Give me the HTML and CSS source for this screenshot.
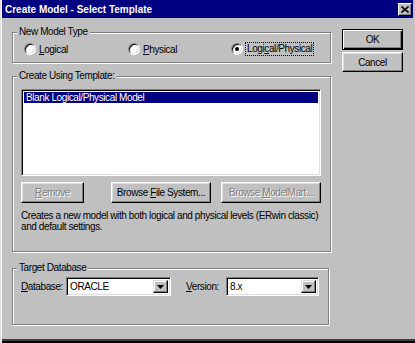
FILE: index.html
```html
<!DOCTYPE html>
<html lang="en">
<head>
    <meta charset="UTF-8">
    <title>Create Model - Select Template</title>
    <link rel="stylesheet" href="styles.css">
</head>
<body>
    <div class="window">
        <!-- Barra de título -->
        <div class="titlebar">
            <span class="title">Create Model - Select Template</span>
            <span class="close-btn">
                <svg width="8" height="7" viewBox="0 0 8 7"><path d="M0.5 0.5 L7.5 6.5 M7.5 0.5 L0.5 6.5" stroke="#000" stroke-width="1.6"/></svg>
            </span>
        </div>

        <div class="dialog">
            <div class="main">
                <fieldset class="group group-type">
                    <legend>New Model Type</legend>
                    <div class="radios">
                        <label class="radio"><span class="radio-circle"></span><span><u>L</u>ogical</span></label>
                        <label class="radio"><span class="radio-circle"></span><span><u>P</u>hysical</span></label>
                        <label class="radio"><span class="radio-circle checked"></span><span class="focus">Logi<u>c</u>al/Physical</span></label>
                    </div>
                </fieldset>

                <fieldset class="group group-template">
                    <legend>Create Using Template:</legend>
                    <div class="listbox">
                        <div class="list-item selected">Blank Logical/Physical Model</div>
                    </div>
                    <div class="button-row">
                        <button class="btn btn-remove" disabled><u>R</u>emove</button>
                        <button class="btn btn-browse"><span>Browse <u>F</u>ile System...</span></button>
                        <button class="btn btn-browse" disabled>Browse <u>M</u>odelMart...</button>
                    </div>
                    <p class="description">Creates a new model with both logical and physical levels (ERwin classic) and default settings.</p>
                </fieldset>

                <fieldset class="group group-target">
                    <legend>Target Database</legend>
                    <div class="combo-row">
                        <span class="combo-label"><u>D</u>atabase:</span>
                        <div class="combo combo-db">
                            <span class="combo-value">ORACLE</span>
                            <span class="combo-arrow"><svg width="7" height="4" viewBox="0 0 7 4"><path d="M0 0h7L3.5 4z" fill="#000"/></svg></span>
                        </div>
                        <span class="combo-label label-version"><u>V</u>ersion:</span>
                        <div class="combo combo-version">
                            <span class="combo-value">8.x</span>
                            <span class="combo-arrow"><svg width="7" height="4" viewBox="0 0 7 4"><path d="M0 0h7L3.5 4z" fill="#000"/></svg></span>
                        </div>
                    </div>
                </fieldset>
            </div>

            <!-- Botões laterais -->
            <div class="side">
                <button class="btn btn-default">OK</button>
                <button class="btn btn-cancel">Cancel</button>
            </div>
        </div>
    </div>
</body>
</html>
```

FILE: styles.css
```css
* {
    box-sizing: border-box;
}

body {
    margin: 0;
    background-color: #c0c0c0;
    font-family: "Liberation Sans", Arial, sans-serif;
    font-size: 10px;
    letter-spacing: -0.4px;
    color: #000;
}

.window {
    width: 415px;
    height: 343px;
    padding: 0 2px 4px 2px;
    background-color: #c0c0c0;
    box-shadow: inset 1px 0 #dfdfdf, inset 2px 0 #fff, inset 0 -2px #000, inset 0 -4px #404040;
    overflow: hidden;
}

/* Barra de título */
.titlebar {
    height: 18px;
    display: flex;
    align-items: center;
    justify-content: space-between;
    padding-left: 3px;
    background-color: #000080;
    color: #fff;
    font-weight: bold;
    letter-spacing: 0;
}

.close-btn {
    width: 14px;
    height: 13px;
    margin-right: 1px;
    display: flex;
    justify-content: center;
    align-items: center;
    background-color: #c0c0c0;
    border: 1px solid;
    border-color: #fff #000 #000 #fff;
    box-shadow: inset -1px -1px #808080;
}

.dialog {
    display: flex;
    padding-left: 10px;
}

.main {
    width: 319px;
}

/* Group boxes */
.group {
    margin: 0;
    padding: 0 7px 0 8px;
    border: 1px solid #808080;
    box-shadow: 1px 1px 0 #fff, inset 1px 1px 0 #fff;
}

.group legend {
    margin-left: -4px;
    padding: 0 2px;
    line-height: 12px;
    background-color: #c0c0c0;
}

.group-type {
    margin-top: 8px;
    padding-top: 4px;
    padding-bottom: 6px;
}

.group-template {
    margin-top: 7px;
    padding-top: 7px;
    padding-bottom: 19px;
}

.group-target {
    width: 317px;
    margin-top: 10px;
    padding-top: 3px;
    padding-bottom: 28px;
}

/* Botões de opção */
.radios {
    display: grid;
    grid-template-columns: 104px 103px 1fr;
    height: 14px;
    margin-left: 3px;
}

.radio {
    display: flex;
    align-items: center;
    gap: 3px;
}

.radio-circle {
    position: relative;
    width: 12px;
    height: 12px;
    border-radius: 50%;
    background-color: #fff;
    border: 1px solid;
    border-color: #808080 #fff #fff #808080;
    box-shadow: inset 1px 1px #000, inset -1px -1px #dfdfdf;
}

.radio-circle.checked::after {
    content: "";
    position: absolute;
    left: 3px;
    top: 3px;
    width: 4px;
    height: 4px;
    border-radius: 50%;
    background-color: #000;
}

.focus {
    padding: 0 1px;
    outline: 1px dotted #000;
    line-height: 12px;
}

/* Lista de modelos */
.listbox {
    width: 300px;
    height: 87px;
    padding: 2px;
    background-color: #fff;
    border: 1px solid;
    border-color: #808080 #fff #fff #808080;
    box-shadow: inset 1px 1px #000, inset -1px -1px #dfdfdf;
}

.list-item {
    height: 11px;
    line-height: 11px;
    padding-left: 2px;
}

.list-item.selected {
    background-color: #000080;
    color: #fff;
}

.button-row {
    display: flex;
    margin-top: 6px;
}

/* Botões */
.btn {
    height: 21px;
    padding: 0;
    font: inherit;
    letter-spacing: inherit;
    color: #000;
    background-color: #c0c0c0;
    border: 1px solid;
    border-color: #fff #000 #000 #fff;
    box-shadow: inset -1px -1px #808080, inset 1px 1px #dfdfdf;
}

.btn:disabled {
    color: #808080;
    text-shadow: 1px 1px 0 #fff;
}

.btn-remove {
    width: 63px;
    margin-right: 27px;
}

.btn-browse {
    width: 100px;
}

.btn-browse + .btn-browse {
    margin-left: 10px;
}

.description {
    width: 300px;
    margin: 7px 0 0 0;
    line-height: 11px;
}

/* Combos */
.combo-row {
    display: flex;
    align-items: center;
}

.combo-label {
    width: 45px;
}

.label-version {
    width: 40px;
    margin-left: 15px;
}

.combo {
    display: flex;
    height: 19px;
    padding: 2px;
    background-color: #fff;
    border: 1px solid;
    border-color: #808080 #fff #fff #808080;
    box-shadow: inset 1px 1px #000, inset -1px -1px #dfdfdf;
}

.combo-db {
    width: 105px;
}

.combo-version {
    width: 93px;
}

.combo-value {
    flex: 1;
    padding-left: 1px;
    line-height: 13px;
}

.combo-arrow {
    width: 15px;
    display: flex;
    justify-content: center;
    align-items: center;
    background-color: #c0c0c0;
    border: 1px solid;
    border-color: #dfdfdf #000 #000 #dfdfdf;
    box-shadow: inset -1px -1px #808080, inset 1px 1px #fff;
}

/* Coluna direita */
.side {
    display: flex;
    flex-direction: column;
    gap: 2px;
    margin-left: 11px;
    padding-top: 11px;
}

.side .btn {
    width: 61px;
}

.btn-default {
    border: 1px solid #000;
    box-shadow: inset 1px 1px #fff, inset -1px -1px #000, inset -2px -2px #808080;
}

.btn-cancel {
    height: 20px;
}
```
